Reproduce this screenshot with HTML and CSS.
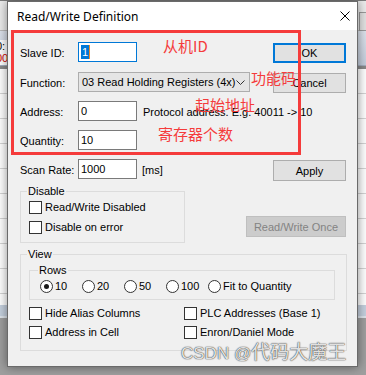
FILE: index.html
```html
<!DOCTYPE html>
<html lang="en">
<head>
  <meta charset="UTF-8">
  <meta name="viewport" content="width=device-width, initial-scale=1.0">
  <title>Read/Write Definition</title>
  <link rel="stylesheet" href="styles.css">
</head>
<body>
  <!-- main window behind the dialog -->
  <div class="app">
    <div class="app-toolbar"><span class="app-tool"></span></div>
    <div class="app-head">
      <div class="app-cell">0:</div>
      <div class="app-cell red">00</div>
    </div>
    <div class="app-table"></div>
    <div class="app-status"></div>
  </div>

  <!-- dialog -->
  <div class="dialog">
    <div class="titlebar">
      <span class="title">Read/Write Definition</span>
      <svg class="close" width="10" height="10" viewBox="0 0 10 10">
        <path d="M0.5 0.5 L9.5 9.5 M9.5 0.5 L0.5 9.5" stroke="#000" stroke-width="1" fill="none"/>
      </svg>
    </div>

    <div class="client">
      <div class="row">
        <span class="lbl">Slave ID:</span>
        <div class="input focus"><span class="sel">1</span><span class="caret"></span></div>
        <button class="btn btn-default">OK</button>
      </div>
      <div class="row func">
        <span class="lbl">Function:</span>
        <div class="combo">
          <span>03 Read Holding Registers (4x)</span>
          <svg class="chev" width="9" height="5" viewBox="0 0 9 5">
            <path d="M0.5 0.5 L4.5 4.5 L8.5 0.5" stroke="#333" stroke-width="1" fill="none"/>
          </svg>
        </div>
        <button class="btn">Cancel</button>
      </div>
      <div class="row">
        <span class="lbl">Address:</span>
        <div class="input">0</div>
        <span class="hint">Protocol address. E.g. 40011 -&gt; 10</span>
      </div>
      <div class="row">
        <span class="lbl">Quantity:</span>
        <div class="input">10</div>
      </div>
      <div class="row">
        <span class="lbl">Scan Rate:</span>
        <div class="input">1000</div>
        <span class="hint unit">[ms]</span>
        <button class="btn btn-apply">Apply</button>
      </div>

      <div class="group-row">
        <fieldset class="group disable">
          <legend>Disable</legend>
          <div class="check"><span class="box"></span>Read/Write Disabled</div>
          <div class="check"><span class="box"></span>Disable on error</div>
        </fieldset>
        <button class="btn btn-once" disabled>Read/Write Once</button>
      </div>

      <fieldset class="group view">
        <legend>View</legend>
        <fieldset class="group rows">
          <legend>Rows</legend>
          <div class="radios">
            <div class="radio-item"><span class="radio on"></span>10</div>
            <div class="radio-item"><span class="radio"></span>20</div>
            <div class="radio-item"><span class="radio"></span>50</div>
            <div class="radio-item"><span class="radio"></span>100</div>
            <div class="radio-item"><span class="radio"></span>Fit to Quantity</div>
          </div>
        </fieldset>
        <div class="check-grid">
          <div class="check"><span class="box"></span>Hide Alias Columns</div>
          <div class="check"><span class="box"></span>PLC Addresses (Base 1)</div>
          <div class="check"><span class="box"></span>Address in Cell</div>
          <div class="check"><span class="box"></span>Enron/Daniel Mode</div>
        </div>
      </fieldset>
    </div>

    <!-- annotations drawn over the screenshot -->
    <div class="mark-box"></div>
    <span class="note note-id">从机ID</span>
    <span class="note note-func">功能码</span>
    <span class="note note-addr">起始地址</span>
    <span class="note note-qty">寄存器个数</span>
    <span class="watermark">CSDN @<span class="wm-cjk">代码大魔王</span></span>
  </div>
</body>
</html>
```

FILE: styles.css
```css
body {
  margin: 0;
  width: 366px;
  height: 375px;
  overflow: hidden;
  position: relative;
  background-color: #9f9f9f;
  font-family: "Liberation Sans", Arial, "Noto Sans CJK SC", sans-serif;
  font-size: 11px;
  color: #000;
}

/* background window */
.app {
  height: 318px;
  display: flex;
  flex-direction: column;
  background-color: #fff;
}
.app-toolbar {
  height: 31px;
  box-sizing: border-box;
  border-top: 1px solid #7d7d7d;
  border-bottom: 1px solid #b9b9b9;
  background-color: #ececec;
  padding: 11px 2px 0 359px;
}
.app-tool {
  display: block;
  width: 6px;
  height: 17px;
  border: 1px solid #9a9a9a;
  background-color: #e2e2e2;
}
.app-head {
  height: 35px;
  padding-top: 9px;
  box-sizing: border-box;
  background:
    linear-gradient(#fff, #fff) 0 9px / 8px 100% no-repeat,
    linear-gradient(#dde3ec, #c3cddb);
  border-bottom: 1px solid #a4afbf;
}
.app-table {
  flex: 1;
  background: repeating-linear-gradient(#fff 0 24px, #d4d4d4 24px 25px);
  border-top: 3px solid #8a8a8a;
}
.app-cell {
  margin-left: -4px;
  height: 12px;
  line-height: 12px;
  font-size: 11px;
}
.app-cell.red {
  color: #c00;
}
.app-status {
  height: 11px;
  background-color: #c5d0de;
  border-bottom: 2px solid #dfe5ec;
}

/* dialog window */
.dialog {
  position: absolute;
  left: 7px;
  top: 1px;
  width: 351px;
  height: 366px;
  box-sizing: border-box;
  border: 1px solid #6a6a6a;
  background-color: #f0f0f0;
  box-shadow: 0 0 10px rgba(0, 0, 0, 0.45);
  display: flex;
  flex-direction: column;
}
.titlebar {
  height: 28px;
  flex: none;
  display: flex;
  align-items: center;
  padding-left: 9px;
  background-color: #fff;
}
.title {
  font-family: "Noto Sans", sans-serif;
  font-size: 12px;
}
.close {
  margin-left: auto;
  margin-right: 7px;
}

.client {
  flex: 1;
  padding: 12px 10px 0 12px;
}
.row {
  display: flex;
  align-items: flex-start;
  height: 20px;
}
.row + .row {
  margin-top: 9px;
}
.row.func {
  margin-top: 10px;
}
.lbl {
  width: 58px;
  padding-top: 5px;
  line-height: 13px;
}
.hint {
  margin-left: 6px;
  padding-top: 5px;
  line-height: 13px;
}
.hint.unit {
  margin-left: 5px;
}
.input {
  width: 59px;
  height: 20px;
  box-sizing: border-box;
  border: 1px solid #7a7a7a;
  background-color: #fff;
  padding: 2px 0 0 2px;
  line-height: 14px;
  display: flex;
}
.input.focus {
  border-color: #0078d7;
}
.sel {
  display: inline-block;
  height: 14px;
  padding: 0 1px;
  background-color: #0078d7;
  color: #fff;
}
.caret {
  width: 1px;
  height: 14px;
  background-color: #f08a24;
}
.combo {
  width: 172px;
  height: 20px;
  box-sizing: border-box;
  border: 1px solid #adadad;
  background-color: #e5e5e5;
  display: flex;
  align-items: center;
  padding: 0 4px 0 3px;
}
.chev {
  margin-left: auto;
}

.btn {
  width: 73px;
  height: 20px;
  margin: 1px 1px 0 auto;
  padding: 0;
  box-sizing: border-box;
  border: 1px solid #adadad;
  background-color: #e1e1e1;
  font: inherit;
  color: #000;
}
.btn-default {
  border: 2px solid #0078d7;
}
.btn-apply {
  height: 21px;
}
.btn-once {
  width: 100px;
  height: 21px;
  margin-bottom: 6px;
  border-color: #bfbfbf;
  background-color: #cccccc;
  color: #838383;
}

/* group boxes */
.group {
  margin: 0;
  min-width: 0;
  border: 1px solid #dcdcdc;
}
.group legend {
  padding: 0 1px;
  margin-left: -2px;
  line-height: 13px;
}
.group-row {
  display: flex;
  align-items: flex-end;
  margin-top: 6px;
}
.disable {
  width: 165px;
  box-sizing: border-box;
  padding: 3px 8px 8px 8px;
}
.disable .check + .check {
  margin-top: 7px;
}
.view {
  margin-top: 5px;
  padding: 3px 11px 11px 8px;
}
.rows {
  padding: 3px 8px 6px 10px;
}
.radios {
  display: flex;
  height: 13px;
}
.radio-item {
  width: 42px;
  display: flex;
  align-items: center;
  gap: 2px;
  line-height: 13px;
}
.radio-item:last-child {
  width: auto;
}
.radio {
  width: 13px;
  height: 13px;
  box-sizing: border-box;
  border: 1px solid #333;
  border-radius: 50%;
  background-color: #fff;
  display: flex;
  align-items: center;
  justify-content: center;
}
.radio.on::after {
  content: "";
  width: 5px;
  height: 5px;
  border-radius: 50%;
  background-color: #1a1a1a;
}
.check {
  display: flex;
  align-items: center;
  gap: 3px;
  height: 13px;
  line-height: 13px;
}
.box {
  width: 13px;
  height: 13px;
  box-sizing: border-box;
  border: 1px solid #333;
  background-color: #fff;
}
.check-grid {
  display: grid;
  grid-template-columns: 155px 1fr;
  row-gap: 6px;
  margin-top: 7px;
}

/* red annotations on top */
.mark-box {
  position: absolute;
  left: 3px;
  top: 28px;
  width: 290px;
  height: 125px;
  box-sizing: border-box;
  border: 3px solid #f53b3b;
}
.note {
  position: absolute;
  font-family: "Noto Sans CJK SC", sans-serif;
  font-size: 15px;
  line-height: 15px;
  color: #f53b3b;
}
.note-id {
  left: 155px;
  top: 36px;
}
.note-func {
  left: 243px;
  top: 68px;
}
.note-addr {
  left: 187px;
  top: 95px;
}
.note-qty {
  left: 150px;
  top: 124px;
}
.watermark {
  position: absolute;
  left: 173px;
  top: 341px;
  font-family: "Liberation Sans", "Noto Sans CJK SC", sans-serif;
  font-size: 17px;
  line-height: 19px;
  color: rgba(250, 250, 250, 0.9);
  text-shadow: 0 0 1px rgba(0, 0, 0, 0.7), 0 0 1px rgba(0, 0, 0, 0.5), 0 0 2px rgba(0, 0, 0, 0.25);
}
.wm-cjk {
  font-size: 19px;
}
```
